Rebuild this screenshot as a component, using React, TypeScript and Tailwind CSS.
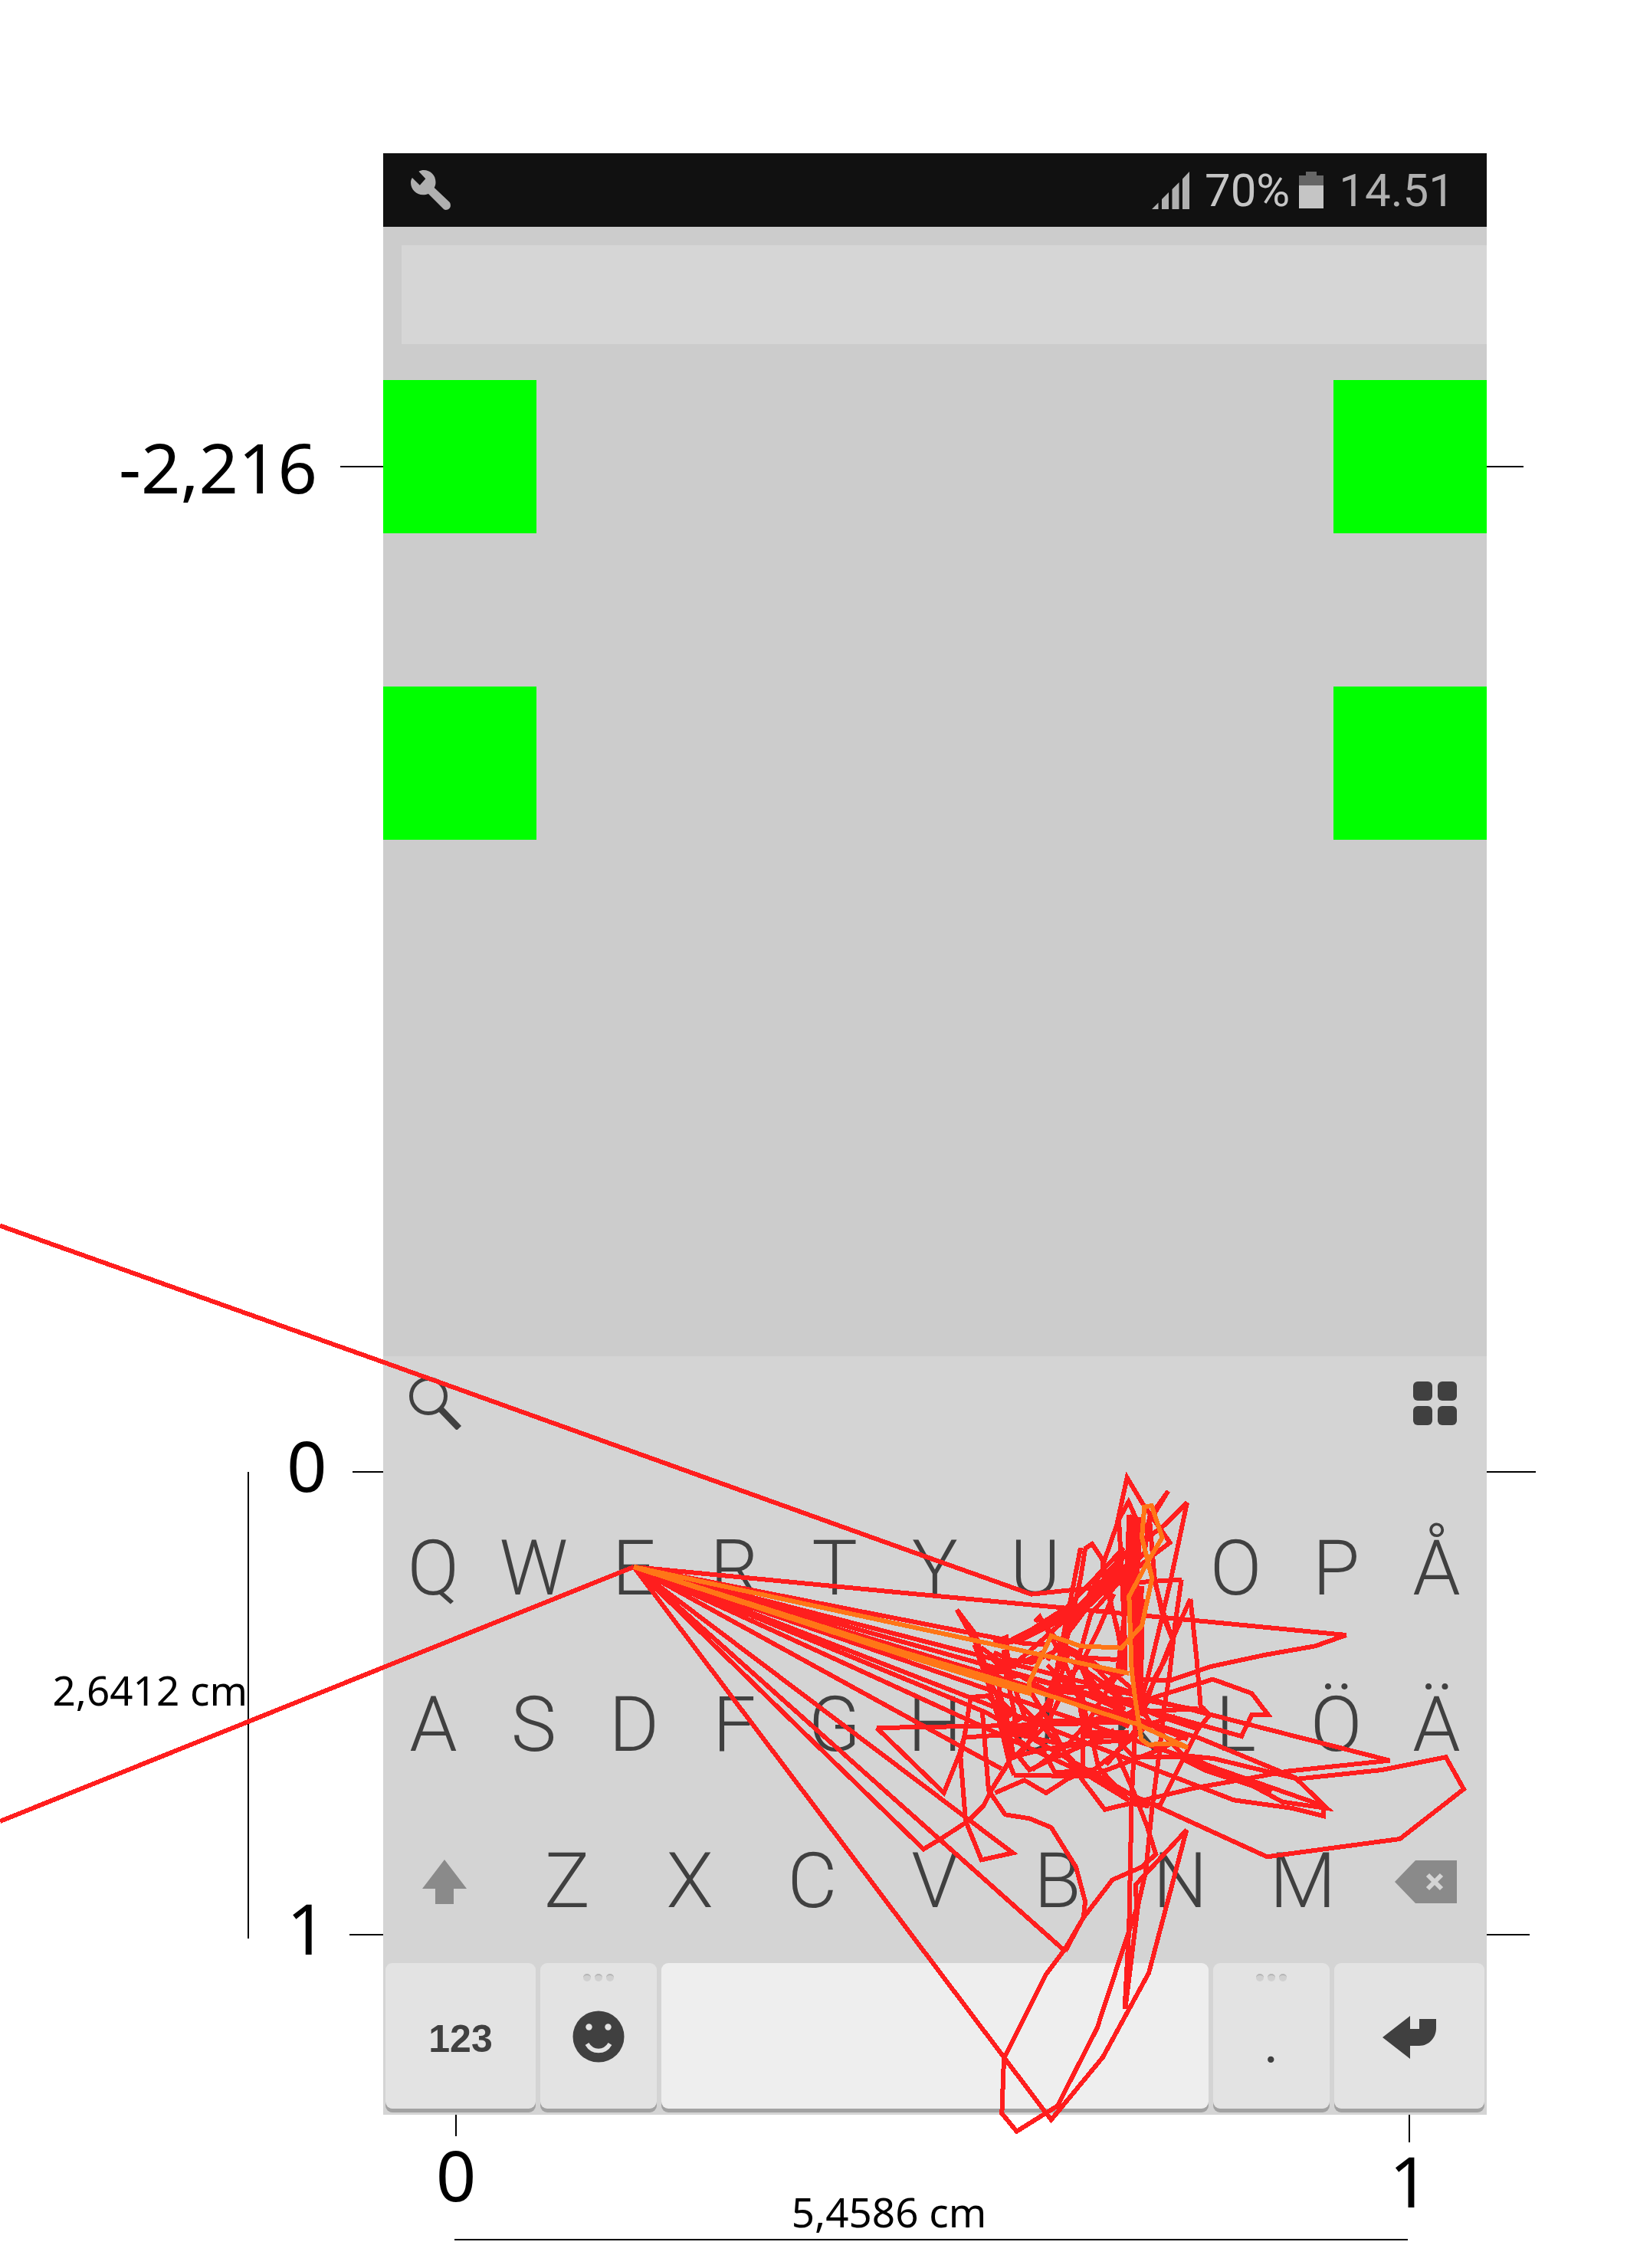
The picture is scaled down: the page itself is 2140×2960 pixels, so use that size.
import React from "react";

const ROW_ONE = ["Q", "W", "E", "R", "T", "Y", "U", "I", "O", "P", "Å"];
const ROW_TWO = ["A", "S", "D", "F", "G", "H", "J", "K", "L", "Ö", "Ä"];
const ROW_THREE = ["Z", "X", "C", "V", "B", "N", "M"];

/* Gesture traces, in thirds of a pixel from the point (1180, 1880). */
const RED_TRACES = [
  "-3540,-841 -2040,-307 0,425 497,602 735,577 800,540 870,440 940,330",
  "-3540,1491 -1059,495",
  "-1059,495 0,597 620,655 1140,705 1730,762 1608,805 1410,840 1200,885 1040,940 930,935",
  "-1059,495 470,795 560,800",
  "-1059,495 1900,1253 1500,1295 1310,1330 1140,1360 930,1410 785,1445 690,1320",
  "-1059,495 1320,1158 1360,1075 1425,1075 1360,990 1208,935 980,1005 860,1080",
  "-1059,495 1155,1165 1530,1320 1655,1440 1480,1415 1350,1345 1110,1235",
  "-1059,495 1240,1290 1640,1430",
  "-1059,495 1290,1408 1520,1440 1640,1470 1640,1435",
  "-1059,495 320,1065 930,1410",
  "-1059,495 1420,1630 1940,1560 2190,1365 2120,1240 1870,1290 1540,1325 1210,1245 1110,1235",
  "-1059,495 380,1285",
  "-1059,495 425,1615 302,1642 240,1490 220,1240 240,1130 260,1005 325,1000 420,1080",
  "-1059,495 630,2000",
  "-1059,495 75,1600 150,1555 250,1490 310,1430 340,1370 410,1260 400,1150 370,960",
  "-1059,495 575,2660 777,2415 957,2085 1105,1525 905,1740 910,1830 860,1980 755,2300 600,2605 440,2705 382,2635 390,2420 555,2090 630,1990 700,1870 815,1720 930,1670 985,1620 950,1510 900,1380 830,1220",
  "-108,1125 155,1380 215,1230 240,1140",
  "-108,1125 320,1118 560,1112 700,1108 900,1100",
  "305,1055 330,1370 395,1465 490,1480 575,1515 672,1670 708,1805 702,1865 630,2000",
  "832,330 872,145 935,250 1040,400 980,445 860,540",
  "780,480 832,330 845,300 878,240 905,300 890,460",
  "840,310 850,500 860,700 835,900",
  "1033,198 940,350 860,450 700,640 420,780",
  "1028,205 960,300 940,440 880,500 720,650 560,860",
  "1107,243 1020,330 860,450 780,530",
  "1107,243 1040,560 960,900 930,1010 900,1100",
  "1085,545 920,555 860,560",
  "1085,545 1060,720 1038,920 1015,1060 1000,1210 970,1440 945,1690 915,1820 865,2225",
  "1120,620 1145,860 1160,1040 1195,1075 1150,1130 1110,1210 1050,1330 1000,1430 900,1410",
  "1120,620 1040,800 1000,900 940,1020 900,1100",
  "960,480 1010,660 1050,780 1020,860 980,930 930,1080",
  "690,420 640,680 600,880 570,1050",
  "705,425 735,405 775,465 782,540 835,740 860,900",
  "708,425 690,540 650,720 620,850 560,1000",
  "205,662 280,760 330,960 380,1130 410,1260 430,1310",
  "210,670 300,830 340,950 400,1080 430,1250",
  "275,800 310,900 370,1010 440,1080 540,1110",
  "520,690 580,760 660,830 760,900 850,1000",
  "512,710 530,690 620,850 680,1000 700,1110",
  "880,290 870,560 860,720 845,900 780,960",
  "910,300 900,560 900,800 905,1100 890,1400 880,1900 863,2225",
  "925,300 910,560 930,800 925,1000",
  "960,310 980,540 1010,680 1050,780",
  "895,290 880,470 860,620 865,900",
  "860,420 640,650 420,790 350,790 400,770 405,860",
  "880,480 700,640 450,860 390,910",
  "870,520 730,680 680,860 640,980",
  "820,600 760,740 700,860 600,990",
  "780,500 720,610 640,690 540,740 440,790",
  "805,620 845,790 860,900",
  "930,570 920,760 910,900",
  "900,390 880,520 895,700 915,900",
  "350,830 420,860 500,870 600,820 700,850 830,858",
  "300,810 380,870 480,860 540,830",
  "380,900 640,970 760,960 860,910",
  "520,940 800,1010 960,1020 1150,1055 1180,1050",
  "430,1080 560,1100 760,1090 960,1060 1150,1050",
  "430,1010 560,1140 700,1300 880,1410",
  "650,860 780,950 900,990",
  "700,900 760,970 850,910",
  "480,960 560,1090 650,1260 700,1310",
  "600,940 500,1160 450,1240 490,1290 640,1220 800,1150",
  "660,900 560,1110 430,1240",
  "780,1020 900,1090 1110,1170",
  "240,1162 440,1150 620,1190 720,1185",
  "340,1370 420,1240 540,1210 720,1185 900,1170",
  "355,1380 470,1330 555,1380 640,1325 700,1300",
  "540,1210 590,1300 740,1290 830,1220 900,1140",
  "430,1310 720,1315 820,1280 1000,1210 1110,1150",
  "700,1000 700,1300",
  "720,1100 760,1280 880,1410",
  "790,1270 850,1200 960,1110 1060,1080",
  "690,1320 785,1445 930,1410",
  "355,940 450,920 560,980 700,990 860,1060",
  "310,890 430,960 470,1080 400,1120",
  "390,820 400,920 430,1060 440,1170 490,1200",
  "560,880 640,960 740,1060 880,1120",
  "640,840 600,960 540,1060 450,1150",
  "860,880 780,1000 720,1100 650,1180 500,1290",
  "810,1130 850,1190 900,1240 1100,1240",
  "770,960 880,1030 1000,1080 1150,1130",
  "900,1000 960,1100 1060,1200 1110,1250",
  "700,840 780,900 830,920 900,980",
];

const RED_MASSES = [
  "905,330 890,430 880,520",
  "860,430 800,560 700,660 630,740",
  "925,620 920,880 905,1080",
  "600,800 680,840 740,980 860,1060",
  "330,900 400,900 370,870 440,880",
  "370,1000 400,1130 510,1140",
  "690,1010 720,1150 880,1150",
  "1090,1240 1180,1285 1440,1370",
  "890,1415 960,1425",
];

const ORANGE_TRACES = [
  "-1059,495 540,840 880,912",
  "-1059,495 490,990 490,945 575,765 690,805 850,812 930,725 970,540 930,380 940,260 968,255 1010,380 950,480 880,610 890,900 905,1020 928,1170 955,1190 1060,1188 1110,1202 900,1105",
  "-1059,495 0,830 480,970 900,1108",
  "-1059,495 0,842 480,988",
];

function Traces() {
  return (
    <svg
      className="pointer-events-none absolute inset-x-0 top-0 h-[2960px] w-full"
      viewBox="0 0 2140 2960"
      preserveAspectRatio="none"
      aria-hidden="true"
    >
      <g
        transform="translate(1180 1880) scale(0.33333)"
        fill="none"
        strokeWidth="18"
        shapeRendering="crispEdges"
      >
        <g stroke="#ff1e1e">
          {RED_TRACES.map((p) => (
            <polyline key={p} points={p} />
          ))}
          {RED_MASSES.map((p) => (
            <polyline key={p} points={p} strokeWidth="32" />
          ))}
        </g>
        <g stroke="#ff7617">
          {ORANGE_TRACES.map((p) => (
            <polyline key={p} points={p} />
          ))}
        </g>
      </g>
    </svg>
  );
}

function StatusBar() {
  return (
    <header className="flex h-24 items-center justify-between bg-[#111111] pr-[42px] pl-9 text-[60px] leading-none text-[#b0b0b0]">
      <svg className="size-[52px]" viewBox="0 0 52 52" fill="#b0b0b0" role="img" aria-label="Settings">
        <path d="M10.4 1.7 19.3 11.3 11.8 19.7 1.9 10C.6 12 0 14 0 16.3 0 25 7 32.3 16 32.3c2.500 0 4.800-.4 7-1.300L42 50c1 1.200 2.200 2 3.800 2 3.400 0 6.100-2.600 6.100-5.700 0-1.800-.3-3.300-1.400-4.600L30.700 23c1.200-2.200 1.800-4.600 1.800-7.300C32.500 6.500 25.500 0 17 0c-2.400 0-4.600.6-6.600 1.700Z" />
      </svg>
      <div className="flex items-center">
        <svg className="h-[49px] w-[49px]" viewBox="0 0 49 49" fill="#b0b0b0" role="img" aria-label="Signal">
          <path d="M8.500 40.500V49H0ZM22 27v22h-9V36ZM35.500 14v35h-9V23ZM49 0v49h-9V9.500Z" />
        </svg>
        <span className="ml-5 pt-0.5 text-[#c5c5c5]">70%</span>
        <svg className="ml-3 h-12 w-8" viewBox="0 0 32 48" role="img" aria-label="Battery">
          <path fill="#666666" d="M9 0h14v5h9v14H0V5h9Z" />
          <path fill="#c5c5c5" d="M0 18h32v30H0Z" />
        </svg>
        <span className="ml-5 pt-0.5">14.51</span>
      </div>
    </header>
  );
}

function TargetRow() {
  return (
    <div className="flex justify-between">
      <div className="size-[200px] bg-[#00ff00]" />
      <div className="size-[200px] bg-[#00ff00]" />
    </div>
  );
}

function LetterKey({ label }: { label: string }) {
  return (
    <button type="button" className="flex min-w-0 items-center justify-center pb-2.5 text-[100px] leading-none font-light">
      {label}
    </button>
  );
}

function Dots() {
  return (
    <span className="flex justify-center gap-[5px] pt-3.5">
      <i className="size-2.5 rounded-full border-t-2 border-[#b4b4b4] bg-[#d0d0d0]" />
      <i className="size-2.5 rounded-full border-t-2 border-[#b4b4b4] bg-[#d0d0d0]" />
      <i className="size-2.5 rounded-full border-t-2 border-[#b4b4b4] bg-[#d0d0d0]" />
    </span>
  );
}

const CAP = "relative h-[190px] rounded-[9px] shadow-[0_5px_0_#a2a2a2]";

function Keyboard() {
  return (
    <section className="bg-[#d4d4d4] text-[#404040]" aria-label="Keyboard">
      <div className="flex h-[180px] items-start justify-between pt-[26px] pr-[39px] pl-8">
        <button type="button" aria-label="Search">
          <svg className="h-[70px] w-[70px]" viewBox="0 0 70 70" fill="none" stroke="#404040">
            <circle cx="27" cy="26" r="22.500" strokeWidth="5" />
            <path d="M42 42 67 68" strokeWidth="8.500" />
          </svg>
        </button>
        <button type="button" aria-label="Layouts" className="mt-[7px]">
          <svg className="size-[57px]" viewBox="0 0 57 57" fill="#404040">
            <rect width="25" height="25" rx="6" />
            <rect x="32" width="25" height="25" rx="6" />
            <rect y="32" width="25" height="25" rx="6" />
            <rect x="32" y="32" width="25" height="25" rx="6" />
          </svg>
        </button>
      </div>
      <div className="grid h-[204px] grid-cols-11">
        {ROW_ONE.map((k) => (
          <LetterKey key={k} label={k} />
        ))}
      </div>
      <div className="grid h-[204px] grid-cols-11">
        {ROW_TWO.map((k) => (
          <LetterKey key={k} label={k} />
        ))}
      </div>
      <div className="grid h-[204px] grid-cols-9">
        <button type="button" aria-label="Shift" className="flex items-center justify-center pb-2">
          <svg className="h-[58px] w-[58px]" viewBox="0 0 58 58" fill="#8a8a8a">
            <path d="M29 0 58 38H41v20H17V38H0Z" />
          </svg>
        </button>
        {ROW_THREE.map((k) => (
          <LetterKey key={k} label={k} />
        ))}
        <button type="button" aria-label="Delete" className="flex items-center justify-center pb-2">
          <svg className="h-[56px] w-[81px]" viewBox="0 0 81 56">
            <path fill="#8a8a8a" d="M0 28 27 0h54v56H27Z" />
            <path d="m43 19 18 18m0-18L43 37" stroke="#d4d4d4" strokeWidth="6" />
          </svg>
        </button>
      </div>
      <div className="grid h-[198px] grid-cols-[196fr_152fr_714fr_152fr_196fr] gap-x-1.5 px-[3px]">
        <button type="button" className={`${CAP} bg-[#e3e3e3] pt-2 font-['Liberation_Sans'] text-[50px] font-bold`}>
          123
        </button>
        <button type="button" aria-label="Emoji" className={`${CAP} flex flex-col items-center bg-[#e3e3e3]`}>
          <Dots />
          <svg className="mt-[38px] size-[68px]" viewBox="0 0 68 68">
            <circle cx="34" cy="34" r="33.500" fill="#404040" />
            <circle cx="21.500" cy="21.500" r="4.200" fill="#e3e3e3" />
            <circle cx="46.500" cy="21.500" r="4.200" fill="#e3e3e3" />
            <path d="M19 43.500C26 55.500 42 55.500 49 43.500" fill="none" stroke="#e3e3e3" strokeWidth="5.500" />
          </svg>
        </button>
        <button type="button" aria-label="Space" className={`${CAP} bg-[#eeeeee]`} />
        <button type="button" className={`${CAP} flex flex-col items-center bg-[#e3e3e3]`}>
          <Dots />
          <span className="mt-[22px] text-[100px] leading-none font-light">.</span>
        </button>
        <button type="button" aria-label="Enter" className={`${CAP} flex items-center justify-center bg-[#e3e3e3]`}>
          <svg className="mt-1 h-[56px] w-[70px]" viewBox="0 0 70 56" fill="#404040">
            <path d="M0 28 36 0v17h12V4h22v12c0 12-9 23-22 23H36v17Z" />
          </svg>
        </button>
      </div>
    </section>
  );
}

export default function App() {
  return (
    <main className="relative min-h-screen overflow-hidden bg-white pt-[200px] font-['Noto_Sans',sans-serif] text-black">
      <div className="grid grid-cols-[500fr_1440fr_200fr] items-start">
        <div className="pt-[361px]">
          <div className="flex h-24 items-center justify-end gap-[30px]">
            <span className="text-[90px] leading-none">-2,216</span>
            <i className="h-0.5 w-14 bg-black" />
          </div>
          <div className="mt-[1216px] flex h-[700px] justify-end">
            <span className="self-center pb-9 text-[53px] leading-none whitespace-nowrap">2,6412 cm</span>
            <i className="mt-12 mb-[43px] w-0.5 bg-black" />
            <div className="flex w-[175px] flex-col justify-between pl-[49px]">
              <div className="flex h-24 items-center justify-between">
                <span className="pb-[18px] text-[92px] leading-none">0</span>
                <i className="h-0.5 w-10 bg-black" />
              </div>
              <div className="flex h-24 items-center justify-between">
                <span className="pb-[18px] text-[92px] leading-none">1</span>
                <i className="h-0.5 w-11 bg-black" />
              </div>
            </div>
          </div>
        </div>

        <div>
          <div className="bg-[#cccccc] font-[Roboto,sans-serif]">
            <StatusBar />
            <div className="pt-6 pl-6">
              <input aria-label="Text" className="block h-[129px] w-full bg-[#d6d6d6] px-6 text-[60px] outline-none" />
            </div>
            <div className="flex h-[1321px] flex-col gap-[200px] pt-[47px]">
              <TargetRow />
              <TargetRow />
            </div>
            <Keyboard />
          </div>
          <div className="flex h-[162px] items-start justify-between pr-[51px] pl-[45px] text-[92px] leading-[100px]">
            <div className="flex w-[100px] flex-col items-center">
              <i className="h-7 w-0.5 bg-black" />
              <span>0</span>
            </div>
            <span className="mr-[114px] mb-[5px] self-end text-[53px] leading-[60px]">5,4586 cm</span>
            <div className="flex w-[100px] flex-col items-center">
              <i className="h-9 w-0.5 bg-black" />
              <span>1</span>
            </div>
          </div>
          <div className="mr-[103px] ml-[93px] h-0.5 bg-black" />
        </div>

        <div className="pt-[408px]">
          <div className="h-0.5 w-12 bg-black" />
          <div className="mt-[1310px] h-0.5 w-16 bg-black" />
          <div className="mt-[602px] h-0.5 w-14 bg-black" />
        </div>
      </div>
      <Traces />
    </main>
  );
}
